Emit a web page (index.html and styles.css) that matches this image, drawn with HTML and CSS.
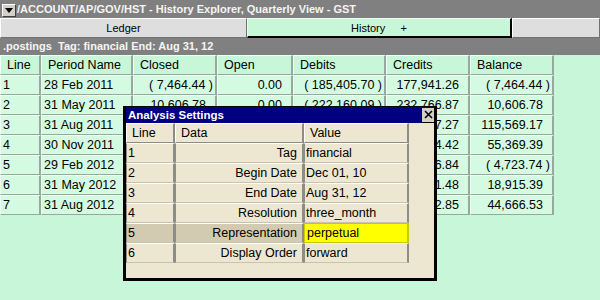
FILE: index.html
```html
<!DOCTYPE html>
<html lang="en">
<head>
    <meta charset="UTF-8">
    <title>History Explorer</title>
    <link rel="stylesheet" href="styles.css">
</head>
<body>
    <!-- TITLE BAR -->
    <div class="titlebar">
        <span class="drop-btn"><svg width="8" height="5" viewBox="0 0 8 5"><polygon points="0,0 8,0 4,5" fill="#000"/></svg></span>
        <span class="title-text">/ACCOUNT/AP/GOV/HST - History Explorer, Quarterly View - GST</span>
    </div>

    <!-- TABS -->
    <div class="tabs">
        <div class="tab">Ledger</div>
        <div class="tab active">History &nbsp;&nbsp;&nbsp;&nbsp;+</div>
        <div class="tab"></div>
    </div>

    <div class="postings">.postings  Tag: financial End: Aug 31, 12</div>

    <!-- HISTORY TABLE -->
    <table class="grid">
        <colgroup>
            <col style="width:41px"><col style="width:92px"><col style="width:84px"><col style="width:76px">
            <col style="width:93px"><col style="width:84px"><col style="width:84px">
        </colgroup>
        <thead>
            <tr><th>Line</th><th>Period Name</th><th>Closed</th><th>Open</th><th>Debits</th><th>Credits</th><th>Balance</th></tr>
        </thead>
        <tbody>
            <tr><td>1</td><td>28 Feb 2011</td><td class="num neg">( 7,464.44 )</td><td class="num">0.00</td><td class="num neg">( 185,405.70 )</td><td class="num">177,941.26</td><td class="num neg">( 7,464.44 )</td></tr>
            <tr><td>2</td><td>31 May 2011</td><td class="num">10,606.78</td><td class="num">0.00</td><td class="num neg">( 222,160.09 )</td><td class="num">232,766.87</td><td class="num">10,606.78</td></tr>
            <tr><td>3</td><td>31 Aug 2011</td><td class="num">115,569.17</td><td class="num">0.00</td><td class="num neg">( 42,675.10 )</td><td class="num">147,637.27</td><td class="num">115,569.17</td></tr>
            <tr><td>4</td><td>30 Nov 2011</td><td class="num">55,369.39</td><td class="num">0.00</td><td class="num neg">( 198,714.20 )</td><td class="num">138,514.42</td><td class="num">55,369.39</td></tr>
            <tr><td>5</td><td>29 Feb 2012</td><td class="num neg">( 4,723.74 )</td><td class="num">0.00</td><td class="num neg">( 186,439.97 )</td><td class="num">126,346.84</td><td class="num neg">( 4,723.74 )</td></tr>
            <tr><td>6</td><td>31 May 2012</td><td class="num">18,915.39</td><td class="num">0.00</td><td class="num neg">( 118,382.35 )</td><td class="num">142,021.48</td><td class="num">18,915.39</td></tr>
            <tr><td>7</td><td>31 Aug 2012</td><td class="num">44,666.53</td><td class="num">0.00</td><td class="num neg">( 109,500.46 )</td><td class="num">135,252.85</td><td class="num">44,666.53</td></tr>
        </tbody>
    </table>

    <!-- DIALOG: ANALYSIS SETTINGS -->
    <div class="dialog">
        <div class="dlg-title">
            <span>Analysis Settings</span>
            <span class="close"><svg width="9" height="9" viewBox="0 0 9 9"><path d="M1 1 L8 8 M8 1 L1 8" stroke="#000" stroke-width="1.6"/></svg></span>
        </div>
        <table class="settings">
            <colgroup><col style="width:49px"><col style="width:129px"><col style="width:105px"></colgroup>
            <thead>
                <tr><th>Line</th><th>Data</th><th>Value</th></tr>
            </thead>
            <tbody>
                <tr><td>1</td><td class="key">Tag</td><td class="val">financial</td></tr>
                <tr><td>2</td><td class="key">Begin Date</td><td class="val">Dec 01, 10</td></tr>
                <tr><td>3</td><td class="key">End Date</td><td class="val">Aug 31, 12</td></tr>
                <tr><td>4</td><td class="key">Resolution</td><td class="val">three_month</td></tr>
                <tr class="selected"><td>5</td><td class="key">Representation</td><td class="val">perpetual</td></tr>
                <tr><td>6</td><td class="key">Display Order</td><td class="val">forward</td></tr>
            </tbody>
        </table>
    </div>
</body>
</html>
```

FILE: styles.css
```css
/* GENERAL */
body {
    margin: 0;
    background-color: #c8f6d8;
    font-family: "Liberation Sans", Arial, sans-serif;
    position: relative;
    height: 300px;
    overflow: hidden;
}

/* TITLE BAR */
.titlebar {
    height: 18px;
    background-color: #808080;
    display: flex;
    align-items: center;
    gap: 1px;
    padding-left: 2px;
}

.drop-btn {
    width: 12px;
    height: 11px;
    background-color: #d4d0c8;
    border: 1px solid;
    border-color: #fff #404040 #404040 #fff;
    display: flex;
    align-items: center;
    justify-content: center;
    margin-top: 2px;
}

.title-text {
    color: #f4f4f4;
    font-weight: bold;
    font-size: 11px;
}

/* TABS */
.tabs {
    display: grid;
    grid-template-columns: 247px 265px 1fr;
    height: 20px;
}

.tab {
    box-sizing: border-box;
    background-color: #dedede;
    border: 1px solid;
    border-color: #fff #707070 #707070 #fff;
    font-size: 11px;
    display: flex;
    align-items: center;
    justify-content: center;
    color: #000;
}

.tab.active {
    background-color: #c8f6d8;
    border-color: #e8fff0 #000 #000 #e8fff0;
    border-width: 1px 2px 2px 1px;
}

.postings {
    height: 17px;
    background-color: #808080;
    color: #f4f4f4;
    font-weight: bold;
    font-size: 11px;
    white-space: pre;
    padding-left: 3px;
    line-height: 16px;
}

/* HISTORY TABLE */
.grid {
    border-collapse: separate;
    border-spacing: 0;
    table-layout: fixed;
    width: 554px;
    font-size: 12.5px;
}

.grid th,
.grid td {
    box-sizing: border-box;
    height: 20px;
    padding: 0 2px;
    border-style: solid;
    border-width: 1px 2px 1px 1px;
    border-color: #eefff4 #93aa9d #93aa9d #eefff4;
    white-space: nowrap;
    overflow: hidden;
    font-weight: normal;
    text-align: left;
}

.grid th {
    background-color: #c8f6d8;
    padding-left: 6px;
}

.grid td {
    background-color: #d4fbe2;
}

.grid td.num {
    text-align: right;
    padding-right: 9px;
}

.grid td.num.neg {
    padding-right: 2px;
}

/* DIALOG */
.dialog {
    position: absolute;
    left: 123px;
    top: 106px;
    width: 314px;
    height: 175px;
    box-sizing: border-box;
    background-color: #ede7d1;
    border: 3px solid #000;
    border-top-width: 1px;
}

.dlg-title {
    height: 16px;
    background-color: #000080;
    color: #fff;
    font-weight: bold;
    font-size: 11.5px;
    display: flex;
    align-items: center;
    padding-left: 2px;
}

.close {
    margin-left: auto;
    width: 12px;
    height: 14px;
    background-color: #d4d0c8;
    border-left: 1px solid #000;
    border-bottom: 1px solid #000;
    display: flex;
    align-items: center;
    justify-content: center;
}

.settings {
    border-collapse: separate;
    border-spacing: 0;
    table-layout: fixed;
    width: 283px;
    font-size: 12.5px;
}

.settings th,
.settings td {
    box-sizing: border-box;
    height: 20px;
    padding: 0 1px;
    border-style: solid;
    border-width: 1px 2px 1px 1px;
    border-color: #fff #8e8c86 #c9c3ae #8e8c86;
    white-space: nowrap;
    overflow: hidden;
    font-weight: normal;
    text-align: left;
}

.settings th {
    padding-left: 5px;
    border-color: #fff #8e8c86 #8e8c86 #fff;
}

.settings td.key {
    text-align: right;
    padding-right: 5px;
}

.settings td.val {
    padding-left: 1px;
}

/* SELECTED ROW */
.settings tr.selected td {
    background-color: #d3cbb1;
}

.settings tr.selected td.val {
    background-color: #ffff00;
    border-color: #c8c800;
    padding-left: 2px;
}
```
